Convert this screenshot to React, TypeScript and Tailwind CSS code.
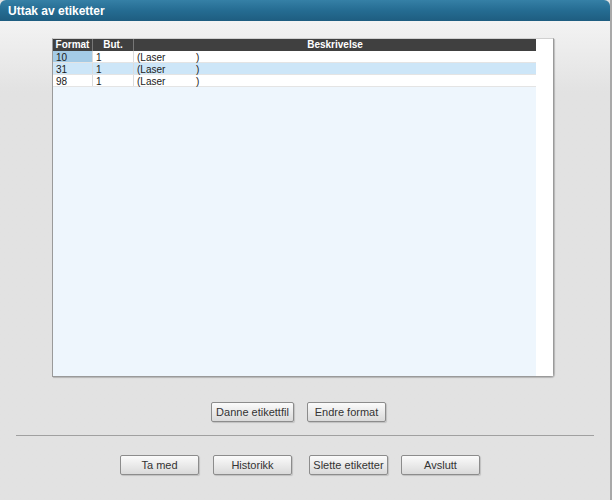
import React from 'react';

const rows = [
  { format: '10', but: '1', desc: '(Laser           )' },
  { format: '31', but: '1', desc: '(Laser           )' },
  { format: '98', but: '1', desc: '(Laser           )' },
];

function Btn({ label, w }: { label: string; w: string }) {
  return (
    <button
      className={`${w} h-[20px] rounded-[2px] border border-[#8c8c8c] bg-gradient-to-b from-[#fbfbfb] to-[#dadada] text-[11px] text-[#333] shadow-[1px_1px_1px_rgba(0,0,0,0.15)] leading-none`}
    >
      {label}
    </button>
  );
}

export default function App() {
  return (
    <div className="w-[613px] h-[500px] overflow-hidden font-['Liberation_Sans',Arial,sans-serif]">
      <div className="flex flex-col w-[612px] h-[500px] border-r-2 border-[#a9a9a9] bg-[#e2e2e2]">
        {/* Title bar */}
        <div className="h-[21px] shrink-0 rounded-t-[6px] bg-gradient-to-b from-[#3580a6] via-[#256c92] to-[#1e5d80] flex items-center px-[8px]">
          <span className="text-white text-[12px] font-bold">Uttak av etiketter</span>
        </div>

        <div className="flex-1 flex flex-col bg-gradient-to-b from-[#f3f3f3] to-[#e2e2e2] to-[15%]">
          {/* Table panel */}
          <div className="ml-[52px] mt-[17px] w-[502px] h-[339px] border border-[#9a9a9a] border-t-[#d0d0d0] rounded-br-[4px] bg-white flex shadow-[1px_1px_1px_rgba(0,0,0,0.2)]">
            <div className="w-[483px] flex flex-col bg-[#eef6fd]">
              <div className="h-[12px] flex bg-[#404040] text-white text-[10px] font-bold leading-[12px]">
                <div className="w-[40px] text-center border-r border-[#777]">Format</div>
                <div className="w-[41px] text-center border-r border-[#777]">But.</div>
                <div className="flex-1 text-center">Beskrivelse</div>
              </div>
              {rows.map((r, i) => (
                <div
                  key={r.format}
                  className={`h-[12px] flex text-[10px] leading-[13px] text-[#1a1a1a] border-b border-[#e4e4e4] ${i === 1 ? 'bg-[#cde6f8]' : 'bg-white'}`}
                >
                  <div className={`w-[40px] pl-[3px] border-r border-[#dcdcdc] ${i === 0 ? 'bg-[#a4cbe6]' : ''}`}>{r.format}</div>
                  <div className="w-[41px] pl-[3px] border-r border-[#dcdcdc]">{r.but}</div>
                  <div className="flex-1 pl-[3px] whitespace-pre">{r.desc}</div>
                </div>
              ))}
            </div>
            <div className="flex-1 bg-white" />
          </div>

          {/* Middle buttons */}
          <div className="mt-[25px] ml-[211px] flex gap-[13px]">
            <Btn label="Danne etikettfil" w="w-[83px]" />
            <Btn label="Endre format" w="w-[79px]" />
          </div>

          <div className="mt-[13px] mx-[16px] h-px bg-[#a0a0a0]" />

          {/* Bottom buttons */}
          <div className="mt-[19px] ml-[120px] flex">
            <Btn label="Ta med" w="w-[79px]" />
            <div className="w-[14px]" />
            <Btn label="Historikk" w="w-[79px]" />
            <div className="w-[17px]" />
            <Btn label="Slette etiketter" w="w-[79px]" />
            <div className="w-[13px]" />
            <Btn label="Avslutt" w="w-[79px]" />
          </div>
        </div>
      </div>
    </div>
  );
}
